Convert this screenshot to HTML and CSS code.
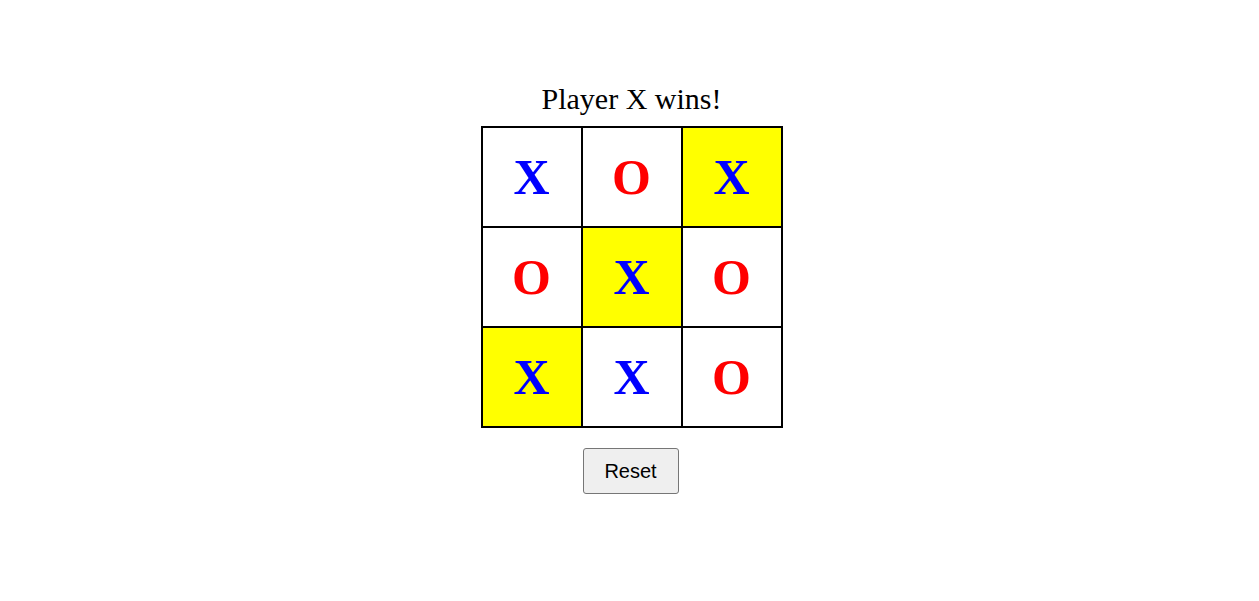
FILE: index.html
```html
<!DOCTYPE html>
<html>
<head>
<meta charset="utf-8">
<link rel="stylesheet" href="styles.css">
</head>
<body>
<div class="app">
  <div class="status">Player X wins!</div>
  <div class="board">
    <div class="cell x">X</div>
    <div class="cell o">O</div>
    <div class="cell x win">X</div>
    <div class="cell o">O</div>
    <div class="cell x win">X</div>
    <div class="cell o">O</div>
    <div class="cell x win">X</div>
    <div class="cell x">X</div>
    <div class="cell o">O</div>
  </div>
  <button class="reset">Reset</button>
</div>
</body>
</html>
```

FILE: styles.css
```css
html, body {
  margin: 0;
  padding: 0;
  background: #ffffff;
}
.app {
  display: flex;
  flex-direction: column;
  align-items: center;
  padding-top: 82px;
  padding-left: 4px;
  font-family: "Liberation Serif", "Times New Roman", serif;
}
.status {
  font-size: 30px;
  line-height: 34px;
  color: #000;
  margin-bottom: 10px;
}
.board {
  display: grid;
  grid-template-columns: repeat(3, 100px);
  grid-template-rows: repeat(3, 100px);
  border: 1px solid #000;
}
.cell {
  box-sizing: border-box;
  border: 1px solid #000;
  display: flex;
  align-items: center;
  justify-content: center;
  font-family: "Liberation Serif", "Times New Roman", serif;
  font-weight: bold;
  font-size: 50px;
  background: #fff;
}
.cell.x { color: #0000ff; }
.cell.o { color: #ff0000; }
.cell.win { background: #ffff00; }
.reset {
  margin-top: 20px;
  margin-right: 2px;
  font-family: "Liberation Sans", Arial, sans-serif;
  font-size: 20px;
  line-height: 22px;
  padding: 10px 20px;
  background: #efefef;
  color: #000;
  border: 1px solid #767676;
  border-radius: 3px;
  width: 96px;
  height: 46px;
}
```
